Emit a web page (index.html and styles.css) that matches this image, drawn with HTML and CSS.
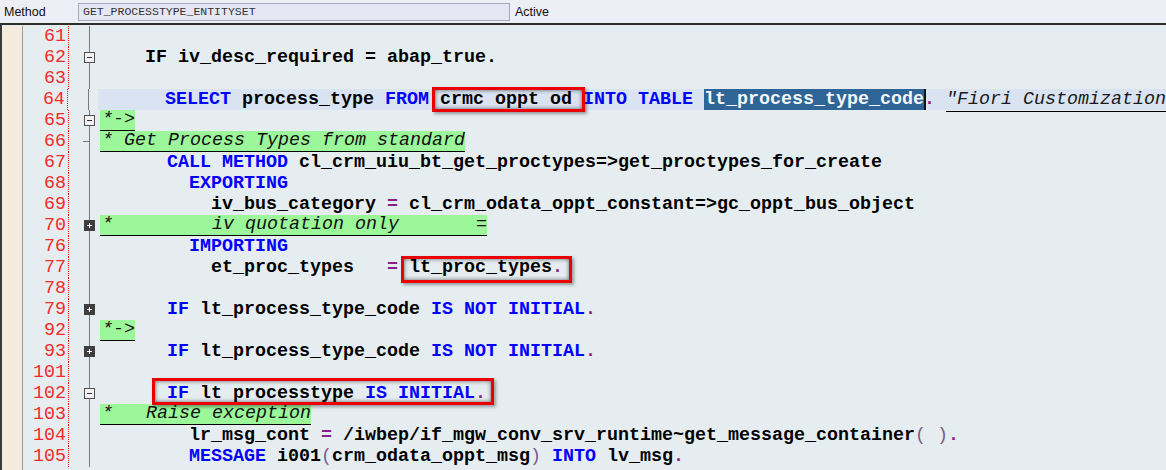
FILE: index.html
```html
<!DOCTYPE html>
<html>
<head>
<meta charset="utf-8">
<link rel="stylesheet" href="styles.css">
</head>
<body>
<div class="header">
  <span class="lbl">Method</span>
  <span class="field">GET_PROCESSTYPE_ENTITYSET</span>
  <span class="status">Active</span>
</div>
<div class="editor">
  <div class="margin"></div>
  <div class="lines">
    <div class="row"><span class="ln">61</span><span class="fold"></span><span class="code"></span></div>
    <div class="row"><span class="ln">62</span><span class="fold"><i class="box minus"></i></span><span class="code">    IF iv_desc_required = abap_true.</span></div>
    <div class="row"><span class="ln">63</span><span class="fold"></span><span class="code"></span></div>
    <div class="row cur"><span class="ln">64</span><span class="fold"></span><span class="code">      <b class="kw">SELECT</b> process_type <b class="kw">FROM</b> <span class="mark m1">crmc oppt od</span> <b class="kw">INTO TABLE</b> <span class="sel">lt_process_type_code</span><span class="caret"></span><span class="op">.</span> <span class="note">"Fiori Customization</span></span></div>
    <div class="row"><span class="ln">65</span><span class="fold"><i class="box minus"></i></span><span class="code"><span class="cmt">*-&gt;</span></span></div>
    <div class="row"><span class="ln">66</span><span class="fold tick"></span><span class="code"><span class="cmt">* Get Process Types from standard</span></span></div>
    <div class="row"><span class="ln">67</span><span class="fold"></span><span class="code">      <b class="kw">CALL METHOD</b> cl_crm_uiu_bt_get_proctypes=&gt;get_proctypes_for_create</span></div>
    <div class="row"><span class="ln">68</span><span class="fold"></span><span class="code">        <b class="kw">EXPORTING</b></span></div>
    <div class="row"><span class="ln">69</span><span class="fold"></span><span class="code">          iv_bus_category <span class="op">=</span> cl_crm_odata_oppt_constant=&gt;gc_oppt_bus_object</span></div>
    <div class="row"><span class="ln">70</span><span class="fold"><i class="box plus"></i></span><span class="code"><span class="cmt">*         iv quotation only       =</span></span></div>
    <div class="row"><span class="ln">76</span><span class="fold"></span><span class="code">        <b class="kw">IMPORTING</b></span></div>
    <div class="row"><span class="ln">77</span><span class="fold"></span><span class="code">          et_proc_types   <span class="op">=</span> <span class="mark m2">lt_proc_types<span class="op">.</span></span></span></div>
    <div class="row"><span class="ln">78</span><span class="fold"></span><span class="code"></span></div>
    <div class="row"><span class="ln">79</span><span class="fold"><i class="box plus"></i></span><span class="code">      <b class="kw">IF</b> lt_process_type_code <b class="kw">IS NOT INITIAL</b><span class="op">.</span></span></div>
    <div class="row"><span class="ln">92</span><span class="fold"></span><span class="code"><span class="cmt">*-&gt;</span></span></div>
    <div class="row"><span class="ln">93</span><span class="fold"><i class="box plus"></i></span><span class="code">      <b class="kw">IF</b> lt_process_type_code <b class="kw">IS NOT INITIAL</b><span class="op">.</span></span></div>
    <div class="row"><span class="ln">101</span><span class="fold"></span><span class="code"></span></div>
    <div class="row"><span class="ln">102</span><span class="fold"><i class="box minus"></i></span><span class="code">      <span class="mark m3"><b class="kw">IF</b> lt processtype <b class="kw">IS INITIAL</b><span class="op">.</span></span></span></div>
    <div class="row"><span class="ln">103</span><span class="fold"></span><span class="code"><span class="cmt">*   Raise exception</span></span></div>
    <div class="row"><span class="ln">104</span><span class="fold"></span><span class="code">        lr_msg_cont <span class="op">=</span> /iwbep/if_mgw_conv_srv_runtime~get_message_container<span class="par">( )</span><span class="op">.</span></span></div>
    <div class="row"><span class="ln">105</span><span class="fold"></span><span class="code">        <b class="kw">MESSAGE</b> i001<span class="par">(</span>crm_odata_oppt_msg<span class="par">)</span> <b class="kw">INTO</b> lv_msg<span class="op">.</span></span></div>
  </div>
</div>
</body>
</html>
```

FILE: styles.css
```css
html, body {
  margin: 0;
  padding: 0;
  width: 1166px;
  height: 470px;
  overflow: hidden;
  background: #e6edf0;
}

.header {
  height: 23px;
  display: flex;
  align-items: center;
  background: #eeeef6;
  font-family: "Liberation Sans", Arial, sans-serif;
  font-size: 12.5px;
  color: #111;
}

.lbl {
  width: 74px;
  padding-left: 4px;
}

.field {
  box-sizing: border-box;
  width: 432px;
  height: 18px;
  margin-top: 1px;
  padding-left: 4px;
  background: #e5e5f3;
  border: 1px solid #a9a9bb;
  font-family: "Liberation Mono", "Courier New", monospace;
  font-size: 11.5px;
  line-height: 16px;
  color: #333;
}

.status {
  padding-left: 5px;
}

.editor {
  display: flex;
  border-top: 2px solid #2e2e2e;
  border-left: 2px solid #3a3a3a;
  padding-top: 1px;
  height: 444px;
}

.margin {
  width: 20px;
  background: #f3ecdc;
  border-right: 1px solid #9a9a9a;
}

.lines {
  flex: 1;
  display: flex;
  flex-direction: column;
  min-width: 0;
  overflow: hidden;
}

.row {
  display: flex;
  height: 21px;
  font-family: "Liberation Mono", "Courier New", monospace;
  font-size: 18.33px;
  line-height: 21px;
}

.ln {
  box-sizing: border-box;
  width: 46px;
  padding-right: 2px;
  text-align: right;
  color: #f52a2a;
  border-right: 1px dotted #f01010;
}

.fold {
  position: relative;
  width: 31px;
  background: linear-gradient(to right, transparent 20px, #7a7a7a 20px, #7a7a7a 21px, transparent 21px);
}

.fold.tick::after {
  content: "";
  position: absolute;
  left: 14px;
  top: 10px;
  width: 6px;
  height: 1px;
  background: #7a7a7a;
}

.box {
  position: absolute;
  left: 15px;
  top: 5px;
  box-sizing: border-box;
  width: 11px;
  height: 11px;
}

.box.minus {
  background: #f2f2f2;
  border: 1px solid #505050;
}

.box.minus::before {
  content: "";
  position: absolute;
  left: 2px;
  top: 4px;
  width: 5px;
  height: 1px;
  background: #303030;
}

.box.plus {
  background: #3e3e3e;
  border: 1px solid #3e3e3e;
}

.box.plus::before {
  content: "";
  position: absolute;
  left: 2px;
  top: 4px;
  width: 5px;
  height: 1px;
  background: #fff;
}

.box.plus::after {
  content: "";
  position: absolute;
  left: 4px;
  top: 2px;
  width: 1px;
  height: 5px;
  background: #fff;
}

.code {
  flex: 1;
  padding-left: 1px;
  white-space: pre;
  font-weight: bold;
  color: #000;
}

.row.cur .code {
  background: #dae3f1;
}

.kw {
  color: #0000ff;
  font-weight: bold;
}

.op {
  color: #8a1f8a;
}

.par {
  color: #7a5a8a;
  font-weight: normal;
}

.cmt {
  display: inline-block;
  box-sizing: border-box;
  height: 21px;
  margin-left: -1px;
  padding-left: 2px;
  background: #9cf79a;
  border-bottom: 1px solid #000;
  font-style: italic;
  font-weight: normal;
  color: #111;
  vertical-align: top;
  line-height: 20px;
}

.sel {
  display: inline-block;
  height: 21px;
  vertical-align: top;
  background: #2f6496;
  color: #f4f6fa;
}

.caret {
  display: inline-block;
  width: 2px;
  height: 21px;
  margin-right: -2px;
  vertical-align: top;
  background: #111;
}

.note {
  font-style: italic;
  font-weight: normal;
  color: #1a1a1a;
  border-bottom: 1px solid #000;
  padding-bottom: 1px;
}

.mark {
  position: relative;
  display: inline-block;
  height: 21px;
  vertical-align: top;
  z-index: 1;
}

.mark::after {
  content: "";
  position: absolute;
  border: 3px solid #ea0000;
  box-shadow: inset 0 0 4px rgba(0, 0, 0, 0.6), 2px 2px 3px rgba(0, 0, 0, 0.35);
}

.m1::after {
  left: -8px;
  right: -13px;
  top: -2px;
  bottom: -2px;
}

.m2::after {
  left: -8px;
  right: -9px;
  top: -1px;
  bottom: -5px;
}

.m3::after {
  left: -15px;
  right: -8px;
  top: -5px;
  bottom: -1px;
}
```
